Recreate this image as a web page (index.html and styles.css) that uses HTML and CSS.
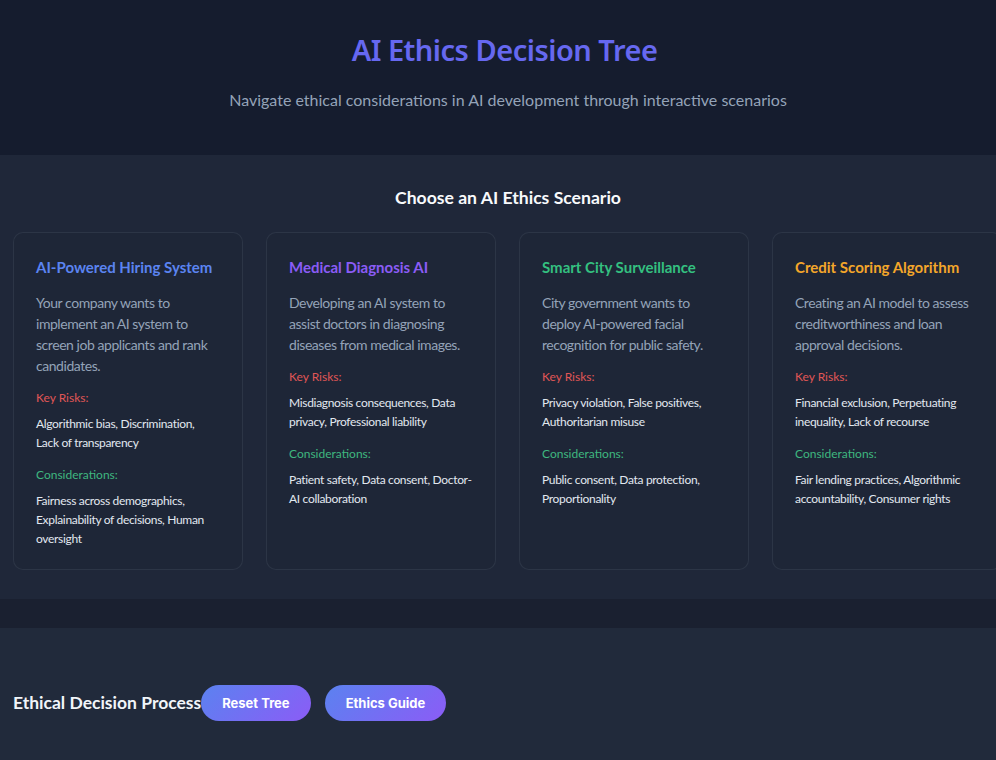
FILE: index.html
```html
<!DOCTYPE html>
<html lang="en">
<head>
<meta charset="utf-8">
<title>AI Ethics Decision Tree</title>
<link rel="stylesheet" href="styles.css">
</head>
<body>
<div class="page">
  <header class="hero">
    <h1 class="hero-title">AI Ethics Decision Tree</h1>
    <p class="hero-sub">Navigate ethical considerations in AI development through interactive scenarios</p>
  </header>

  <section class="scenarios">
    <h2 class="section-title">Choose an AI Ethics Scenario</h2>
    <div class="card-grid">
      <article class="card">
        <h3 class="card-title blue">AI-Powered Hiring System</h3>
        <p class="card-desc">Your company wants to implement an AI system to screen job applicants and rank candidates.</p>
        <div class="label risk">Key Risks:</div>
        <p class="card-list">Algorithmic bias, Discrimination, Lack&nbsp;of transparency</p>
        <div class="label cons">Considerations:</div>
        <p class="card-list">Fairness across demographics, Explainability of decisions, Human oversight</p>
      </article>
      <article class="card">
        <h3 class="card-title purple">Medical Diagnosis AI</h3>
        <p class="card-desc">Developing an AI system to assist doctors in diagnosing diseases from medical images.</p>
        <div class="label risk">Key Risks:</div>
        <p class="card-list">Misdiagnosis consequences, Data privacy, Professional liability</p>
        <div class="label cons">Considerations:</div>
        <p class="card-list">Patient safety, Data consent, Doctor-AI collaboration</p>
      </article>
      <article class="card">
        <h3 class="card-title green">Smart City Surveillance</h3>
        <p class="card-desc">City government wants to deploy AI-powered facial recognition for public safety.</p>
        <div class="label risk">Key Risks:</div>
        <p class="card-list">Privacy violation, False positives, Authoritarian misuse</p>
        <div class="label cons">Considerations:</div>
        <p class="card-list">Public consent, Data protection, Proportionality</p>
      </article>
      <article class="card">
        <h3 class="card-title orange">Credit Scoring Algorithm</h3>
        <p class="card-desc">Creating an AI model to assess creditworthiness and loan approval decisions.</p>
        <div class="label risk">Key Risks:</div>
        <p class="card-list">Financial exclusion, Perpetuating inequality, Lack of recourse</p>
        <div class="label cons">Considerations:</div>
        <p class="card-list">Fair lending practices, Algorithmic accountability, Consumer rights</p>
      </article>
    </div>
  </section>

  <section class="process">
    <div class="process-head">
      <h2 class="process-title">Ethical Decision Process</h2>
      <div class="controls">
        <button class="btn">Reset Tree</button>
        <button class="btn">Ethics Guide</button>
      </div>
    </div>
  </section>
</div>
</body>
</html>
```

FILE: styles.css
```css
html {
  overflow: hidden;
  background: #1a2030;
}
body {
  margin: 0;
  background: #1a2030;
  font-family: "Lato", "Noto Sans", sans-serif;
  color: #e2e8f0;
}
.page {
  width: 1016px;
}
.hero {
  background: #151c2e;
  padding: 32px 20px 43px;
  text-align: center;
}
.hero-title {
  margin: 0 7px 20px 0;
  font-family: "Noto Sans", sans-serif;
  font-size: 29px;
  line-height: 36px;
  font-weight: 600;
  color: #6668f0;
  letter-spacing: -0.5px;
}
.hero-sub {
  margin: 0;
  font-size: 16px;
  line-height: 24px;
  color: #94a3b8;
}
.scenarios {
  background: #1f2739;
  padding: 31px 13px 29px;
}
.section-title {
  margin: 0 0 22px;
  text-align: center;
  font-size: 17.6px;
  line-height: 24px;
  font-weight: 700;
  color: #f8fafc;
}
.card-grid {
  display: grid;
  grid-template-columns: repeat(4, 230px);
  gap: 23px;
}
.card {
  background: #1e2637;
  border: 1px solid rgba(148, 163, 184, 0.12);
  border-radius: 10px;
  padding: 24px 22px 21px;
}
.card-title {
  margin: 0 0 15px;
  font-size: 15px;
  line-height: 20px;
  font-weight: 700;
}
.blue { color: #5b84f1; }
.purple { color: #8b5cf6; }
.green { color: #34c080; }
.orange { color: #f4a62a; }
.card-desc {
  margin: 0 0 13px;
  font-size: 14px;
  line-height: 21px;
  letter-spacing: -0.45px;
  color: #94a3b8;
}
.label {
  font-size: 12px;
  line-height: 18px;
  margin-bottom: 7px;
}
.risk { color: #e05656; }
.cons { color: #3fb77f; }
.card-list {
  margin: 0 0 14px;
  font-size: 12px;
  line-height: 19px;
  letter-spacing: -0.32px;
  color: #e2e8f0;
}
.card-list:last-child {
  margin-bottom: 0;
}
.process {
  margin-top: 29px;
  background: #212a3b;
  padding: 57px 13px 60px;
}
.process-head {
  display: flex;
  align-items: center;
}
.process-title {
  margin: 0;
  font-size: 17.5px;
  line-height: 24px;
  font-weight: 700;
  color: #f1f5f9;
}
.controls {
  display: flex;
  gap: 14px;
}
.btn {
  height: 36px;
  padding: 0 21px;
  border: none;
  border-radius: 18px;
  background: linear-gradient(135deg, #5b82f0 0%, #8b5cf6 100%);
  color: #ffffff;
  font-family: "Inter", sans-serif;
  font-size: 13px;
  font-weight: 700;
}
```
